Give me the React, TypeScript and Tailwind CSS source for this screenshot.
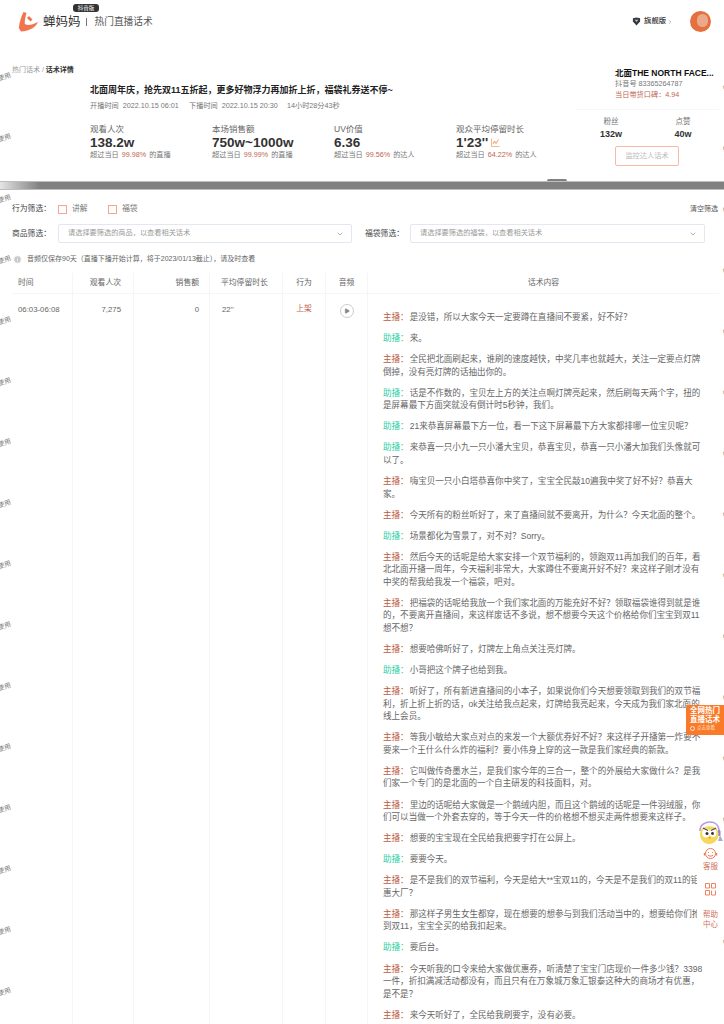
import { ChevronDown, ChevronRight, Play, Info } from 'lucide-react';

const scripts: { who: '主播' | '助播'; lines: string[] }[] = [
  { who: '主播', lines: ['是没错，所以大家今天一定要蹲在直播间不要紧，好不好？'] },
  { who: '助播', lines: ['来。'] },
  { who: '主播', lines: ['全民把北面刷起来，谁刷的速度越快，中奖几率也就越大，关注一定要点灯牌', '倒掉，没有亮灯牌的话抽出你的。'] },
  { who: '助播', lines: ['话是不作数的，宝贝左上方的关注点啊灯牌亮起来，然后刷每天两个字，扭的', '是屏幕最下方面突就没有倒计时5秒钟，我们。'] },
  { who: '助播', lines: ['21来恭喜屏幕最下方一位，看一下这下屏幕最下方大家都排哪一位宝贝呢？'] },
  { who: '助播', lines: ['来恭喜一只小九一只小潘大宝贝，恭喜宝贝，恭喜一只小潘大加我们头像就可', '以了。'] },
  { who: '主播', lines: ['嗨宝贝一只小白塔恭喜你中奖了，宝宝全民敲10遍我中奖了好不好？恭喜大', '家。'] },
  { who: '主播', lines: ['今天所有的粉丝听好了，来了直播间就不要离开，为什么？今天北面的整个。'] },
  { who: '助播', lines: ['场景都化为雪景了，对不对？Sorry。'] },
  { who: '主播', lines: ['然后今天的话呢是给大家安排一个双节福利的，领跑双11再加我们的百年，看', '北北面开播一周年，今天福利非常大，大家蹲住不要离开好不好？来这样子刚才没有', '中奖的帮我给我发一个福袋，吧对。'] },
  { who: '主播', lines: ['把福袋的话呢给我放一个我们家北面的万能充好不好？领取福袋谁得到就是谁', '的，不要离开直播间，来这样废话不多说，想不想要今天这个价格给你们宝宝到双11', '想不想？'] },
  { who: '主播', lines: ['想要哈佛听好了，灯牌左上角点关注亮灯牌。'] },
  { who: '助播', lines: ['小哥把这个牌子也给到我。'] },
  { who: '主播', lines: ['听好了，所有新进直播间的小本子，如果说你们今天想要领取到我们的双节福', '利，折上折上折的话，ok关注给我点起来，灯牌给我亮起来，今天成为我们家北面的', '线上会员。'] },
  { who: '主播', lines: ['等我小敏给大家点对点的来发一个大额优券好不好？来这样子开播第一炸要不', '要来一个王什么什么炸的福利？要小伟身上穿的这一款是我们家经典的新款。'] },
  { who: '主播', lines: ['它叫做传奇墨水兰，是我们家今年的三合一，整个的外展给大家做什么？是我', '们家一个专门的是北面的一个自主研发的科技面料，对。'] },
  { who: '主播', lines: ['里边的话呢给大家做是一个鹅绒内胆，而且这个鹅绒的话呢是一件羽绒服，你', '们可以当做一个外套去穿的，等于今天一件的价格想不想买走两件想要来这样子。'] },
  { who: '主播', lines: ['想要的宝宝现在全民给我把要字打在公屏上。'] },
  { who: '助播', lines: ['要要今天。'] },
  { who: '主播', lines: ['是不是我们的双节福利，今天是给大**宝双11的，今天是不是我们的双11的钜', '惠大厂？'] },
  { who: '主播', lines: ['那这样子男生女生都穿，现在想要的想参与到我们活动当中的，想要给你们抢', '到双11，宝宝全买的给我扣起来。'] },
  { who: '助播', lines: ['要后台。'] },
  { who: '主播', lines: ['今天听我的口令来给大家做优惠券，听清楚了宝宝门店现价一件多少钱？3398', '一件，折扣满减活动都没有，而且只有在万象城万象汇银泰这种大的商场才有优惠，', '是不是？'] },
  { who: '主播', lines: ['来今天听好了，全民给我刷要字，没有必要。'] },
];

const stats = [
  { label: '观看人次', value: '138.2w', pct: '99.98%', tail: '的直播' },
  { label: '本场销售额', value: '750w~1000w', pct: '99.99%', tail: '的直播' },
  { label: 'UV价值', value: '6.36', pct: '99.56%', tail: '的达人' },
  { label: '观众平均停留时长', value: "1'23''", pct: '64.22%', tail: '的达人' },
];

const marksLeft = Array.from({ length: 16 }, (_, i) => 73 + i * 61);
const marksRight = Array.from({ length: 15 }, (_, i) => 84 + i * 61);

function Logo() {
  return (
    <svg width="21" height="21" viewBox="0 0 21 21" className="shrink-0">
      <path d="M5.5 1 L8.5 2 C7.5 6 6.5 9 6.8 13 C10 15 14 14 20 11 C18 16 12 20 3 20.5 L0.8 17 C1.5 11 3 6 5.5 1 Z" fill="#f2744f" />
      <path d="M11 5 L14.5 8.5 L12.5 10.5 L9 7 Z" fill="#f2744f" />
    </svg>
  );
}

function Mascot() {
  return (
    <svg width="27" height="24" viewBox="0 0 27 24">
      <path d="M3 10 C3 3 9 1 13 1 C18 1 22 4 22 10" fill="none" stroke="#b79ae0" strokeWidth="1.6" />
      <rect x="20.5" y="9" width="3" height="6" rx="1.5" fill="#9c7bd8" />
      <path d="M4 9 C8 4 18 4 21 10 C23 16 19 23 12 23 C5 23 1 15 4 9 Z" fill="#f7d85b" />
      <ellipse cx="9" cy="12" rx="4" ry="4.5" fill="#ffffff" />
      <ellipse cx="16" cy="12" rx="3.5" ry="4" fill="#ffffff" />
      <circle cx="10" cy="12.5" r="1.5" fill="#333333" />
      <circle cx="15.5" cy="12.5" r="1.4" fill="#333333" />
      <path d="M6 7 L11 9.5 M19 7 L14 9.5" stroke="#4a4a4a" strokeWidth="1.2" />
      <path d="M11 16 L14 16 L12.5 18 Z" fill="#f09a3e" />
      <path d="M23 14 L26 20 L21 20 Z" fill="#9fb4c4" />
    </svg>
  );
}

export default function App() {
  return (
    <div className="relative h-[1024px] w-[724px] overflow-hidden bg-white font-['Liberation_Sans','Noto_Sans_CJK_SC',sans-serif] text-[#333]">
      {/* header */}
      <header className="relative flex h-[60px] items-start justify-between pl-[18px] pr-[13px] pt-[11px]">
        <div className="flex items-center">
          <Logo />
          <span className="ml-[4px] text-[12.5px] leading-[20px] text-[#333]">蝉妈妈</span>
          <span className="ml-[5px] h-[8px] w-px bg-[#777]" />
          <span className="ml-[8px] text-[9.7px] leading-[20px] text-[#555]">热门直播话术</span>
          <span className="absolute left-[73px] top-[4px] flex h-[8px] w-[26px] items-center justify-center rounded-[3px] bg-[#333] text-[5.5px] text-white">抖音版</span>
        </div>
        <div className="flex items-center">
          <svg width="9" height="9" viewBox="0 0 10 10">
            <path d="M1 1.5 L5 0.5 L9 1.5 L9 5 L5 9.5 L1 5 Z" fill="#2f3a52" />
            <path d="M3 3 L5 5.5 L7 3 Z" fill="#f2c14e" />
          </svg>
          <span className="ml-[3px] text-[7.3px] font-medium text-[#333]">旗舰版</span>
          <ChevronRight className="ml-[1px] h-[6px] w-[6px] text-[#777]" />
          <div className="relative ml-[17px] h-[21px] w-[21px] overflow-hidden rounded-full bg-[#e5703f]">
            <div className="absolute left-[7px] top-[3px] h-[13px] w-[11px] rounded-full bg-[#eba98a]" />
          </div>
        </div>
      </header>

      {/* live summary */}
      <section className="relative h-[121px] pl-[12px] pr-[15px]">
        <div className="pt-[5px] text-[7px] leading-[9px] text-[#999]">
          热门话术 / <span className="font-bold text-[#333]">话术详情</span>
        </div>
        <div className="ml-[78px] mt-[10px]">
          <h1 className="whitespace-nowrap text-[9px] font-bold leading-[12px] text-[#222]">北面周年庆，抢先双11五折起，更多好物浮力再加折上折，福袋礼券送不停~</h1>
          <div className="mt-[5px] flex whitespace-nowrap text-[7.2px] leading-[10px] text-[#777]">
            <span className="w-[99px]">开播时间&nbsp;&nbsp;2022.10.15 06:01</span>
            <span className="w-[98px]">下播时间&nbsp;&nbsp;2022.10.15 20:30</span>
            <span>14小时28分43秒</span>
          </div>
          <div className="mt-[13px] flex">
            {stats.map((s) => (
              <div key={s.label} className="w-[122px]">
                <div className="text-[8.5px] leading-[11px] text-[#666]">{s.label}</div>
                <div className="flex items-center text-[13.5px] font-bold leading-[15px] text-[#333]">
                  {s.value}
                  {s.label === '观众平均停留时长' && (
                    <svg width="9" height="9" viewBox="0 0 9 9" className="ml-[3px]">
                      <path d="M0.5 0.5 V8.5 H8.5" fill="none" stroke="#f6a56a" strokeWidth="0.8" />
                      <path d="M2 6 L3.5 3 L5 5.5 L7.5 1.5" fill="none" stroke="#f0813a" strokeWidth="0.8" />
                    </svg>
                  )}
                </div>
                <div className="whitespace-nowrap text-[7.2px] leading-[10px] text-[#777]">
                  超过当日 <span className="mx-[1px] text-[#c0654f]">{s.pct}</span> {s.tail}
                </div>
              </div>
            ))}
          </div>
        </div>
        <aside className="absolute left-[599px] top-[8px] w-[120px]">
          <div className="ml-[16px] w-[110px] whitespace-nowrap text-[8.5px] font-bold leading-[11px] text-[#111]">北面THE NORTH FACE...</div>
          <div className="ml-[16px] text-[7.2px] leading-[10px] text-[#777]">抖音号 83365264787</div>
          <div className="ml-[16px] text-[7.2px] leading-[11px] text-[#c0654f]">当日带货口碑：4.94</div>
          <div className="-ml-[24px] mt-[9px] h-px w-[144px] bg-[#f7f7f7]" />
          <div className="mt-[7px] flex w-[96px] justify-between text-center">
            <div className="w-[24px]">
              <div className="text-[7.5px] leading-[10px] text-[#777]">粉丝</div>
              <div className="mt-[1px] text-[9px] font-bold leading-[12px] text-[#333]">132w</div>
            </div>
            <div className="w-[24px]">
              <div className="text-[7.5px] leading-[10px] text-[#777]">点赞</div>
              <div className="mt-[1px] text-[9px] font-bold leading-[12px] text-[#333]">40w</div>
            </div>
          </div>
          <div className="ml-[16px] mt-[6px] flex h-[20px] w-[64px] items-center justify-center rounded-[2px] border border-[#f9b9a5] text-[7.2px] text-[#bbb]">监控达人话术</div>
        </aside>
        <span className="absolute bottom-0 left-[547px] h-[2px] w-[20px] rounded-t-full bg-[#808080]" />
      </section>

      {/* grey strip */}
      <div className="relative h-[9px] border-y border-[#bdbdbd] bg-[#808080]">
        <span className="absolute left-0 top-0 h-full w-[40px] bg-gradient-to-r from-[#e5e5e5] to-[#808080]" />
      </div>

      {/* filters */}
      <section className="pl-[12px] pr-[6px] pt-[14px] text-[7.8px] text-[#555]">
        <div className="flex h-[10px] items-center">
          <span className="w-[46px] text-[#444]">行为筛选：</span>
          <span className="h-[9px] w-[9px] border border-[#f8a590]" />
          <span className="ml-[5px] w-[27px] text-[#777]">讲解</span>
          <span className="ml-[9px] h-[9px] w-[9px] border border-[#f8a590]" />
          <span className="ml-[5px] text-[#777]">福袋</span>
          <span className="ml-auto text-[7px] text-[#555]">清空筛选</span>
        </div>
        <div className="mt-[10px] flex items-center">
          <span className="w-[46px] text-[#444]">商品筛选：</span>
          <div className="flex h-[19px] w-[294px] items-center justify-between rounded-[2px] border border-[#e3e7ef] pl-[9px] pr-[7px] text-[7.2px] text-[#999]">
            请选择要筛选的商品，以查看相关话术
            <ChevronDown className="h-[8px] w-[8px] text-[#888]" />
          </div>
          <span className="ml-[13px] w-[45px] text-[#444]">福袋筛选：</span>
          <div className="flex h-[19px] w-[295px] items-center justify-between rounded-[2px] border border-[#e3e7ef] pl-[9px] pr-[7px] text-[7.2px] text-[#999]">
            请选择要筛选的福袋，以查看相关话术
            <ChevronDown className="h-[8px] w-[8px] text-[#888]" />
          </div>
        </div>
        <div className="mt-[9px] flex h-[14px] items-center text-[7px] text-[#666]">
          <Info className="ml-[1px] h-[9px] w-[9px] fill-[#c8c8c8] text-white" />
          <span className="ml-[5px]">音频仅保存90天（直播下播开始计算，将于2023/01/13截止），请及时查看</span>
        </div>
      </section>

      {/* table */}
      <section className="ml-[12px] mr-[5px] mt-[7px] grid grid-cols-[61px_61px_76px_73px_43px_42px_1fr] text-[7.8px] text-[#666]">
        <div className="flex h-[21px] items-center border-b border-r border-[#f5f5f5] pl-[6px]">时间</div>
        <div className="flex h-[21px] items-center justify-end border-b border-r border-[#f5f5f5] pr-[12px]">观看人次</div>
        <div className="flex h-[21px] items-center justify-end border-b border-r border-[#f5f5f5] pr-[10px]">销售额</div>
        <div className="flex h-[21px] items-center border-b border-r border-[#f5f5f5] pl-[11px]">平均停留时长</div>
        <div className="flex h-[21px] items-center justify-center border-b border-r border-[#f5f5f5]">行为</div>
        <div className="flex h-[21px] items-center justify-center border-b border-r border-[#f5f5f5]">音频</div>
        <div className="flex h-[21px] items-center justify-center border-b border-[#f5f5f5]">话术内容</div>

        <div className="h-[760px] border-r border-[#f5f5f5] pl-[6px] pt-[10px] leading-[12px]">06:03-06:08</div>
        <div className="border-r border-[#f5f5f5] pr-[12px] pt-[10px] text-right leading-[12px]">7,275</div>
        <div className="border-r border-[#f5f5f5] pr-[10px] pt-[10px] text-right leading-[12px]">0</div>
        <div className="border-r border-[#f5f5f5] pl-[12px] pt-[10px] leading-[12px]">22''</div>
        <div className="border-r border-[#f5f5f5] pt-[9px] text-center leading-[12px] text-[#c0654f]">上架</div>
        <div className="flex justify-center border-r border-[#f5f5f5] pt-[10px]">
          <span className="flex h-[14px] w-[14px] items-center justify-center rounded-full border border-[#ccc]">
            <Play className="h-[6px] w-[6px] fill-[#888] text-[#888]" />
          </span>
        </div>
        <div className="pl-[15px] pt-[17px]">
          {scripts.map((p, i) => (
            <p key={i} className="mb-[8.6px] whitespace-nowrap text-[8.55px] leading-[12.5px] text-[#666]">
              {p.lines.map((line, j) => (
                <span key={j} className="block">
                  {j === 0 && (
                    <span className={p.who === '主播' ? 'mr-[1px] text-[#bd5a42]' : 'mr-[1px] text-[#2fcf9f]'}>{p.who}：</span>
                  )}
                  {line}
                </span>
              ))}
            </p>
          ))}
        </div>
      </section>

      {/* watermark */}
      {marksLeft.map((y) => (
        <span key={y} className="absolute -left-[2px] -rotate-[20deg] text-[6.5px] leading-[8px] text-[#777]" style={{ top: y }}>使用</span>
      ))}
      {marksRight.map((y) => (
        <span key={y} className="absolute -right-[5px] -rotate-[20deg] text-[6.5px] leading-[8px] text-[#888]" style={{ top: y }}>蝉</span>
      ))}

      {/* floating promo */}
      <div className="absolute left-[686px] top-[705px] h-[30px] w-[38px] rounded-l-[3px] bg-[#f97b2a] pl-[4px] pt-px text-[7.5px] font-bold leading-[9px] text-white">
        全网热门
        <br />
        直播话术
        <div className="flex items-center text-[4.5px] font-normal leading-[8px] text-[#ffe3cf]">
          <span className="mr-[2px] h-[5px] w-[5px] rounded-full border border-[#ffe3cf]" />
          点击查看
        </div>
      </div>

      {/* help panel */}
      <div className="absolute left-[697px] top-[845px] flex h-[95px] w-[27px] flex-col items-center bg-white text-[7.5px] leading-[10px] text-[#cf7258]">
        <div className="relative w-full">
          <svg width="15" height="15" viewBox="0 0 15 15" className="absolute left-[6px] top-px">
            <circle cx="7.5" cy="7.5" r="5" fill="none" stroke="#ee7755" strokeWidth="1" />
            <path d="M1.5 7 V9.5 M13.5 7 V9.5" stroke="#ee7755" strokeWidth="1.4" />
            <path d="M5 9 C6 10.5 9 10.5 10 9" fill="none" stroke="#ee7755" strokeWidth="1" />
            <circle cx="5.5" cy="6.5" r="0.6" fill="#ee7755" />
            <circle cx="9.5" cy="6.5" r="0.6" fill="#ee7755" />
          </svg>
        </div>
        <span className="mt-[17px]">客服</span>
        <svg width="11" height="13" viewBox="0 0 11 13" className="mt-[11px]">
          <path d="M0.5 0.5 H4.5 V5 H0.5 Z M6.5 0.5 H10.5 V5 H6.5 Z M0.5 7.5 H4.5 V12 H0.5 Z M6.5 7.5 V12 M10.5 7.5 V12 M6.5 12 H10.5" fill="none" stroke="#ee7755" strokeWidth="0.9" />
        </svg>
        <span className="mt-[14px] text-center">帮助<br />中心</span>
      </div>
      <div className="absolute left-[697px] top-[821px]">
        <Mascot />
      </div>
    </div>
  );
}
